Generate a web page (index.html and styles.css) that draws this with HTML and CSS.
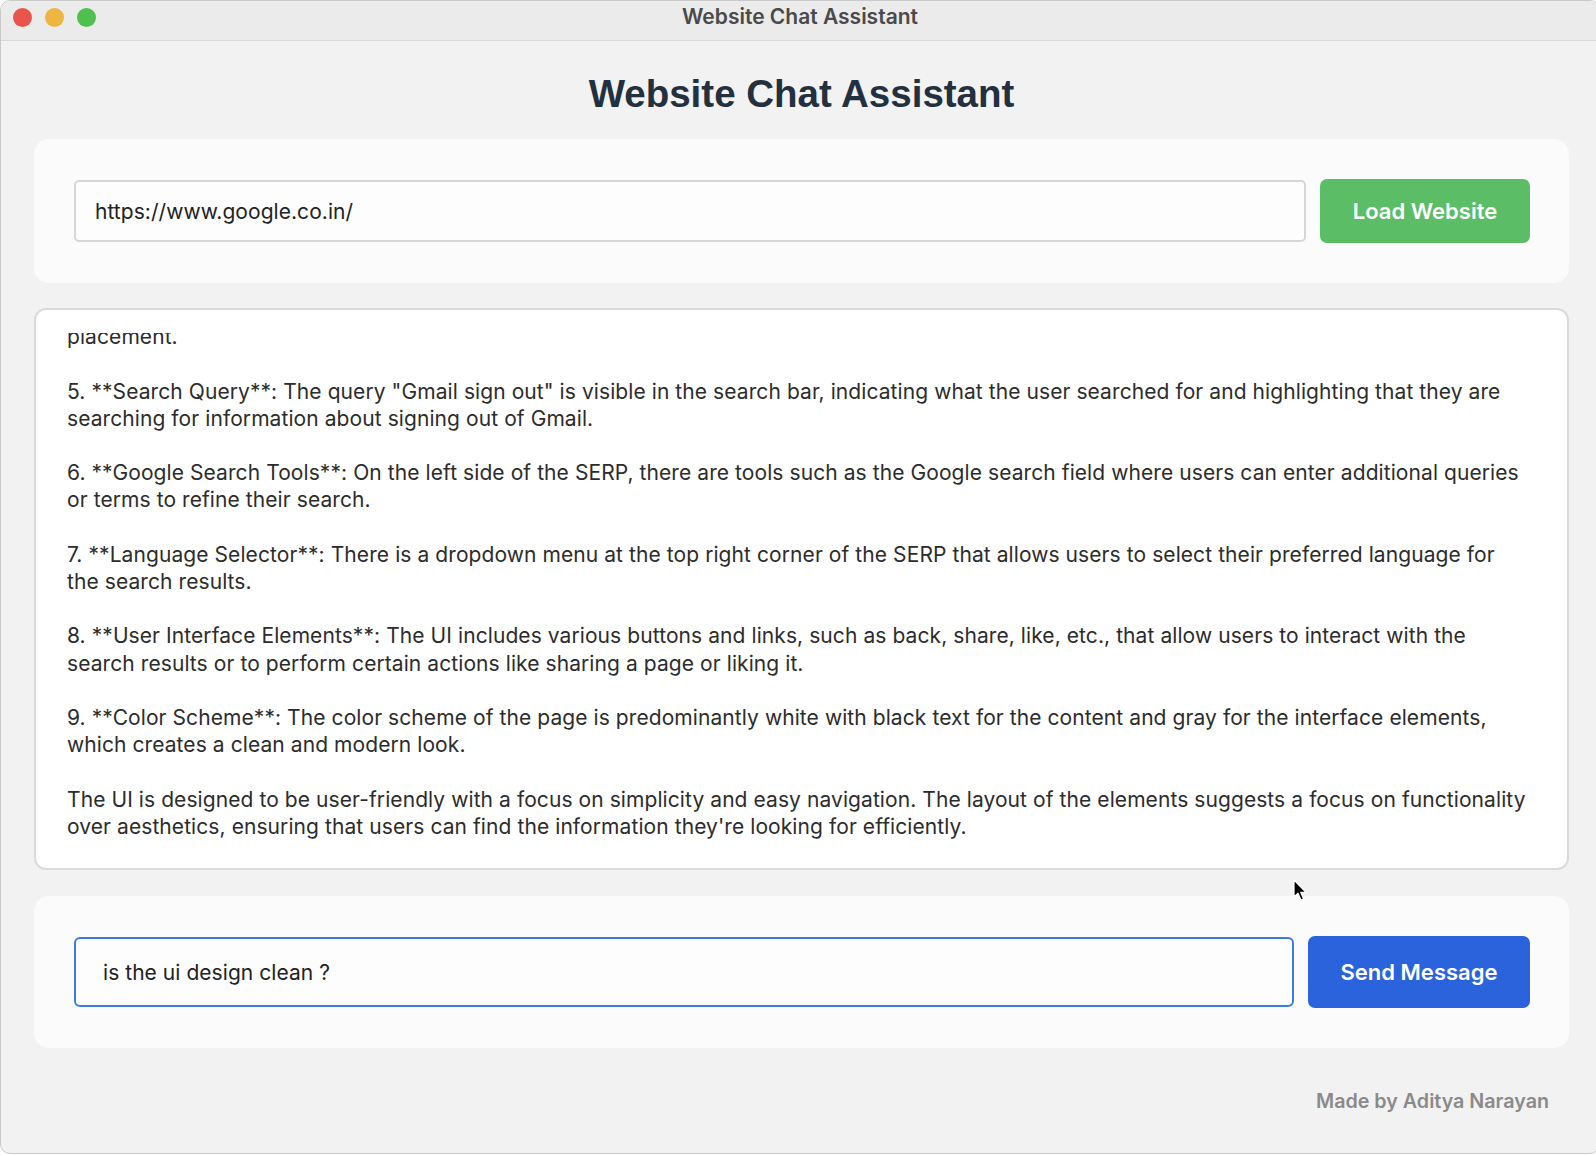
FILE: index.html
```html
<!DOCTYPE html>
<html lang="en">
<head>
<meta charset="utf-8">
<title>Website Chat Assistant</title>
<link rel="stylesheet" href="styles.css">
</head>
<body>
<div class="window">
  <div class="titlebar">
    <div class="lights">
      <span class="light red"></span>
      <span class="light yellow"></span>
      <span class="light green"></span>
    </div>
    <div class="title">Website Chat Assistant</div>
  </div>
  <main class="content">
    <h1 class="heading">Website Chat Assistant</h1>
    <section class="card">
      <input class="field url-field" type="text" value="https://www.google.co.in/">
      <button class="btn btn-load">Load Website</button>
    </section>
    <section class="chat">
      <div class="chat-scroll">
        <p>4. **Search Results**: The main section of the page displays the search results, each with a title, a link and a short description, arranged in a clear list format with consistent<br>placement.</p>
        <p>5. **Search Query**: The query "Gmail sign out" is visible in the search bar, indicating what the user searched for and highlighting that they are searching for information about signing out of Gmail.</p>
        <p>6. **Google Search Tools**: On the left side of the SERP, there are tools such as the Google search field where users can enter additional queries or terms to refine their search.</p>
        <p>7. **Language Selector**: There is a dropdown menu at the top right corner of the SERP that allows users to select their preferred language for the search results.</p>
        <p>8. **User Interface Elements**: The UI includes various buttons and links, such as back, share, like, etc., that allow users to interact with the search results or to perform certain actions like sharing a page or liking it.</p>
        <p>9. **Color Scheme**: The color scheme of the page is predominantly white with black text for the content and gray for the interface elements, which creates a clean and modern look.</p>
        <p>The UI is designed to be user-friendly with a focus on simplicity and easy navigation. The layout of the elements suggests a focus on functionality over aesthetics, ensuring that users can find the information they're looking for efficiently.</p>
      </div>
    </section>
    <section class="card card-send">
      <input class="field msg-field" type="text" value="is the ui design clean ?">
      <button class="btn btn-send">Send Message</button>
    </section>
    <footer class="footer">Made by Aditya Narayan</footer>
  </main>
  <svg class="cursor" width="16" height="24" viewBox="0 0 16 24" aria-hidden="true">
    <path d="M1 1 L1 18 L5 14.2 L8 21 L10.6 19.9 L7.7 13.3 L13 13.3 Z" fill="#000" stroke="#fff" stroke-width="1.2" stroke-linejoin="round"/>
  </svg>
</div>
</body>
</html>
```
FILE: styles.css
```css
* { box-sizing: border-box; }

html, body {
  margin: 0;
  padding: 0;
  background: #ffffff;
}

body {
  width: 1596px;
  height: 1156px;
  overflow: hidden;
  font-family: "Liberation Sans", Arial, sans-serif;
}

.window {
  position: relative;
  width: 1600px;
  height: 1154px;
  background: #f2f2f2;
  border: 1px solid #c9c9c9;
  border-radius: 10px;
  overflow: hidden;
}

.titlebar {
  position: relative;
  height: 40px;
  background: #ebebeb;
  border-bottom: 1px solid #d9d9d9;
  display: flex;
  align-items: center;
  justify-content: center;
}

.lights {
  position: absolute;
  left: 12px;
  top: 7px;
  display: flex;
  gap: 13px;
}

.light {
  width: 19px;
  height: 19px;
  border-radius: 50%;
}
.red { background: #e9554d; }
.yellow { background: #efb541; }
.green { background: #4fbf4d; }

.title {
  font-family: Inter, "Liberation Sans", sans-serif;
  font-size: 21px;
  font-weight: 600;
  color: #4a4a4a;
  margin-left: 0;
  margin-top: -8px;
}

.content {
  padding: 0 28px 0 33px;
  width: 1596px;
  display: flex;
  flex-direction: column;
}

.heading {
  margin: 30px 0 22px;
  height: 46px;
  line-height: 46px;
  text-align: center;
  font-size: 38.5px;
  font-weight: bold;
  color: #22303f;
}

.card {
  background: #fbfbfb;
  border-radius: 15px;
  padding: 40px 39px 40px 40px;
  display: flex;
  align-items: center;
  gap: 14px;
}

.field {
  flex: 1;
  min-width: 0;
  height: 62px;
  background: #fdfdfd;
  border: 2px solid #d6d6d6;
  border-radius: 5px;
  padding: 0 19px;
  font-family: Inter, "Liberation Sans", sans-serif;
  font-size: 21px;
  letter-spacing: 0.05px;
  color: #222;
  outline: none;
}

.btn {
  border: none;
  border-radius: 7px;
  color: #ffffff;
  font-family: Inter, "Liberation Sans", sans-serif;
  font-size: 22px;
  font-weight: 600;
  cursor: pointer;
}

.btn-load {
  width: 210px;
  height: 64px;
  background: #5cbd67;
}

.chat {
  margin-top: 25px;
  height: 562px;
  background: #ffffff;
  border: 2px solid #dadada;
  border-radius: 12px;
  padding: 23px 37.5px 28px 31px;
  display: flex;
}

.chat-scroll {
  flex: 1;
  overflow: hidden;
  display: flex;
  flex-direction: column;
  justify-content: flex-end;
  font-family: Inter, "Liberation Sans", sans-serif;
  font-size: 21px;
  letter-spacing: 0.08px;
  line-height: 27.2px;
  color: #2c2c2c;
}

.chat-scroll p {
  margin: 0 0 27.2px;
  flex-shrink: 0;
}
.chat-scroll p:last-child { margin-bottom: 0; }

.card-send {
  margin-top: 26px;
}

.msg-field {
  height: 70px;
  border: 2.5px solid #3b7be6;
  border-radius: 6px;
  padding: 0 27px;
}

.btn-send {
  width: 222px;
  height: 72px;
  background: #2b63dc;
}

.footer {
  margin-top: 41px;
  padding-right: 20px;
  text-align: right;
  font-family: Inter, "Liberation Sans", sans-serif;
  font-size: 19.7px;
  line-height: 24px;
  font-weight: 600;
  color: #8a8a8a;
}

.cursor {
  position: absolute;
  left: 1292px;
  top: 878px;
}
```
